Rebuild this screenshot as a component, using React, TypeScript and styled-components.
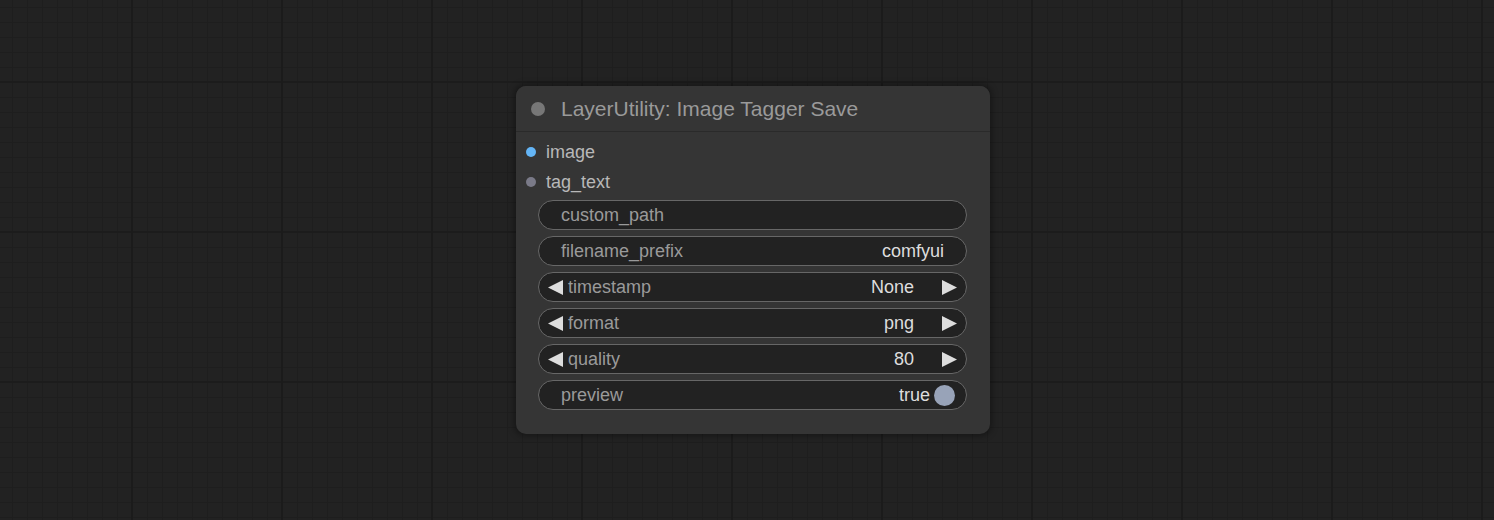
import React from "react";
import styled, { createGlobalStyle } from "styled-components";

const Global = createGlobalStyle`
  html, body { margin: 0; padding: 0; background: #222222; }
  body { font-family: "Liberation Sans", Arial, sans-serif; }
  * { box-sizing: border-box; }
`;

const Canvas = styled.div`
  position: relative;
  width: 1494px;
  height: 520px;
  overflow: hidden;
  background-color: #222222;
  background-image:
    linear-gradient(to right, #1b1b1b 0 2px, transparent 2px),
    linear-gradient(to bottom, #1c1c1c 0 2px, transparent 2px),
    linear-gradient(to right, #1e1e1e 0 1px, transparent 1px),
    linear-gradient(to bottom, #1e1e1e 0 1px, transparent 1px);
  background-size: 150px 150px, 150px 150px, 15px 15px, 15px 15px;
  background-position: 131px 0, 0 81px, 12px 0, 0 7px;
`;

const Node = styled.div<{ $x: number; $y: number; $w: number }>`
  position: absolute;
  left: ${(p) => p.$x}px;
  top: ${(p) => p.$y}px;
  width: ${(p) => p.$w}px;
  background: #353535;
  border-radius: 10px;
  box-shadow: 0 0 6px 2px rgba(0, 0, 0, 0.35);
  display: flex;
  flex-direction: column;
`;

const Title = styled.div`
  height: 46px;
  display: flex;
  align-items: center;
  gap: 16px;
  padding-left: 15px;
  border-bottom: 1px solid #2a2a2a;
  border-radius: 10px 10px 0 0;
  background: #353535;
`;

const TitleDot = styled.span`
  width: 14px;
  height: 14px;
  border-radius: 50%;
  background: #777777;
`;

const TitleText = styled.span`
  font-size: 21px;
  color: #9a9a9a;
  line-height: 1;
`;

const Inputs = styled.div`
  display: flex;
  flex-direction: column;
  padding-top: 5px;
`;

const InputRow = styled.div`
  height: 30px;
  display: flex;
  align-items: center;
  gap: 10px;
  padding-left: 10px;
`;

const SlotDot = styled.span<{ $color: string }>`
  width: 10px;
  height: 10px;
  border-radius: 50%;
  background: ${(p) => p.$color};
`;

const InputLabel = styled.span`
  font-size: 18px;
  color: #b8b8b8;
`;

const Widgets = styled.div`
  display: flex;
  flex-direction: column;
  gap: 6px;
  padding: 3px 23px 24px 22px;
`;

const Widget = styled.div<{ $combo?: boolean; $toggle?: boolean }>`
  height: 30px;
  border: 1px solid #676767;
  border-radius: 15px;
  background: #222222;
  display: flex;
  align-items: center;
  padding-left: ${(p) => (p.$combo ? 9 : 22)}px;
  padding-right: ${(p) => (p.$combo ? 9 : p.$toggle ? 11 : 22)}px;
  font-size: 18px;
`;

const Label = styled.span`
  color: #9a9a9a;
  flex: 1;
`;

const Value = styled.span<{ $gap?: number }>`
  color: #dddddd;
  margin-right: ${(p) => p.$gap ?? 0}px;
`;

const ArrowSvg = styled.svg<{ $left?: boolean }>`
  width: 15px;
  height: 15px;
  flex: none;
  margin-right: ${(p) => (p.$left ? 5 : 0)}px;
`;

const Knob = styled.span`
  width: 21px;
  height: 21px;
  border-radius: 50%;
  background: #98a3b8;
  margin-left: 4px;
`;

const Arrow = ({ left }: { left?: boolean }) => (
  <ArrowSvg $left={left} viewBox="0 0 15 15">
    {left ? (
      <polygon points="15,0 15,15 0,7.5" fill="#dddddd" />
    ) : (
      <polygon points="0,0 0,15 15,7.5" fill="#dddddd" />
    )}
  </ArrowSvg>
);

const combos = [
  { label: "timestamp", value: "None" },
  { label: "format", value: "png" },
  { label: "quality", value: "80" },
];

export default function App() {
  return (
    <>
      <Global />
      <Canvas>
        <Node $x={516} $y={86} $w={474}>
          <Title>
            <TitleDot />
            <TitleText>LayerUtility: Image Tagger Save</TitleText>
          </Title>
          <Inputs>
            <InputRow>
              <SlotDot $color="#64b5f6" />
              <InputLabel>image</InputLabel>
            </InputRow>
            <InputRow>
              <SlotDot $color="#7a7a88" />
              <InputLabel>tag_text</InputLabel>
            </InputRow>
          </Inputs>
          <Widgets>
            <Widget>
              <Label>custom_path</Label>
            </Widget>
            <Widget>
              <Label>filename_prefix</Label>
              <Value>comfyui</Value>
            </Widget>
            {combos.map((c) => (
              <Widget $combo key={c.label}>
                <Arrow left />
                <Label>{c.label}</Label>
                <Value $gap={28}>{c.value}</Value>
                <Arrow />
              </Widget>
            ))}
            <Widget $toggle>
              <Label>preview</Label>
              <Value>true</Value>
              <Knob />
            </Widget>
          </Widgets>
        </Node>
      </Canvas>
    </>
  );
}
